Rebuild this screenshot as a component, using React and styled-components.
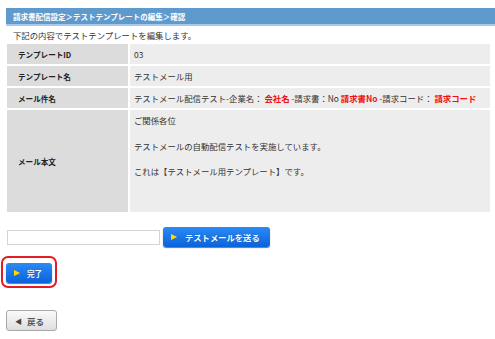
import React from "react";
import styled, { createGlobalStyle } from "styled-components";

const GlobalStyle = createGlobalStyle`
  html, body {
    margin: 0;
    padding: 0;
    background: #ffffff;
  }
  body {
    font-family: "Noto Sans CJK JP", "Liberation Sans", sans-serif;
    color: #333333;
  }
`;

const Page = styled.div`
  width: 495px;
  height: 339px;
  padding-top: 8px;
  box-sizing: border-box;
  overflow: hidden;
`;

const TitleBar = styled.div`
  margin-left: 6px;
  height: 16px;
  background: #5f9acd;
  border-bottom: 2px solid #a9c9ea;
  display: flex;
  align-items: center;
  padding-left: 7px;
  color: #ffffff;
  font-size: 7.5px;
  font-weight: bold;
`;

const Content = styled.div`
  padding: 0 5px 0 7px;
`;

const Lead = styled.div`
  height: 18px;
  display: flex;
  align-items: center;
  padding-left: 6px;
  font-size: 8.4px;
`;

const InfoTable = styled.div`
  display: grid;
  grid-template-columns: 121px 1fr;
  column-gap: 2px;
  row-gap: 2px;
`;

const Label = styled.div`
  background: #dcdcdc;
  height: ${(p) => p.$h || 20}px;
  display: flex;
  align-items: center;
  padding-left: 11px;
  font-size: 7.6px;
  font-weight: bold;
  color: #222;
`;

const Value = styled.div`
  background: #ededed;
  height: ${(p) => p.$h || 20}px;
  display: flex;
  align-items: center;
  padding-left: 4px;
  font-size: 8.4px;
  white-space: pre;
  overflow: hidden;
`;

const BodyValue = styled(Value)`
  align-items: flex-start;
  padding-top: 4px;
  box-sizing: border-box;
  white-space: pre-line;
  line-height: 12.8px;
`;

const Tag = styled.b`
  color: #f01010;
`;

const SendRow = styled.div`
  display: flex;
  align-items: center;
  gap: 3px;
  margin-top: 15px;
`;

const MailInput = styled.input`
  width: 153px;
  height: 15px;
  box-sizing: border-box;
  border: 1px solid #d4d4d4;
  padding: 0 3px;
  font-size: 8px;
  outline: none;
`;

const BlueButton = styled.button`
  height: 20px;
  box-sizing: border-box;
  border: none;
  border-radius: 3px;
  background: linear-gradient(#2a8bf5, #0a62dc);
  box-shadow: 0 1px 1px rgba(0, 0, 0, 0.55);
  display: flex;
  align-items: center;
  gap: ${(p) => p.$gap || 8}px;
  padding: 0 ${(p) => p.$pr || 10}px 0 8px;
  color: #ffffff;
  font-family: inherit;
  font-size: ${(p) => p.$fs || 8.3}px;
  font-weight: bold;
  text-shadow: 0 0 1px rgba(0, 0, 0, 0.4);
  cursor: pointer;
`;

const Play = styled.span`
  width: 0;
  height: 0;
  border-top: 3.5px solid transparent;
  border-bottom: 3.5px solid transparent;
  border-left: 6px solid #ffd800;
  filter: drop-shadow(0 0 0.5px #a88a00);
`;

const Highlight = styled.div`
  display: inline-flex;
  margin: 9px 0 0 -6px;
  padding: 5px 3px 3px 3px;
  border: 2px solid #e41b23;
  border-radius: 7px;
`;

const BackButton = styled.button`
  margin-top: 22px;
  height: 21px;
  width: 51px;
  margin-left: -1px;
  box-sizing: border-box;
  border: 1px solid #a9a9a9;
  border-radius: 3px;
  background: linear-gradient(#fafafa, #dedede);
  display: flex;
  align-items: center;
  gap: 5px;
  padding: 0 0 0 8px;
  color: #555555;
  font-family: inherit;
  font-size: 8.5px;
  font-weight: bold;
  cursor: pointer;
`;

const BackArrow = styled.span`
  font-size: 7px;
  color: #444;
`;

export default function App() {
  return (
    <>
      <GlobalStyle />
      <Page>
        <TitleBar>請求書配信設定＞テストテンプレートの編集＞確認</TitleBar>
        <Content>
          <Lead>下記の内容でテストテンプレートを編集します。</Lead>
          <InfoTable>
            <Label>テンプレートID</Label>
            <Value>03</Value>
            <Label>テンプレート名</Label>
            <Value>テストメール用</Value>
            <Label>メール件名</Label>
            <Value>
              {"テストメール配信テスト-企業名： "}
              <Tag>会社名</Tag>
              {" -請求書：No "}
              <Tag>請求書No</Tag>
              {" -請求コード： "}
              <Tag>請求コード</Tag>
            </Value>
            <Label $h={102}>メール本文</Label>
            <BodyValue $h={102}>
              {"ご関係各位\n\nテストメールの自動配信テストを実施しています。\n\nこれは【テストメール用テンプレート】です。"}
            </BodyValue>
          </InfoTable>
          <SendRow>
            <MailInput type="text" />
            <BlueButton>
              <Play />
              テストメールを送る
            </BlueButton>
          </SendRow>
          <Highlight>
            <BlueButton $gap={7} $pr={10} $fs={7.6}>
              <Play />
              完了
            </BlueButton>
          </Highlight>
          <BackButton>
            <BackArrow>◀</BackArrow>
            戻る
          </BackButton>
        </Content>
      </Page>
    </>
  );
}
